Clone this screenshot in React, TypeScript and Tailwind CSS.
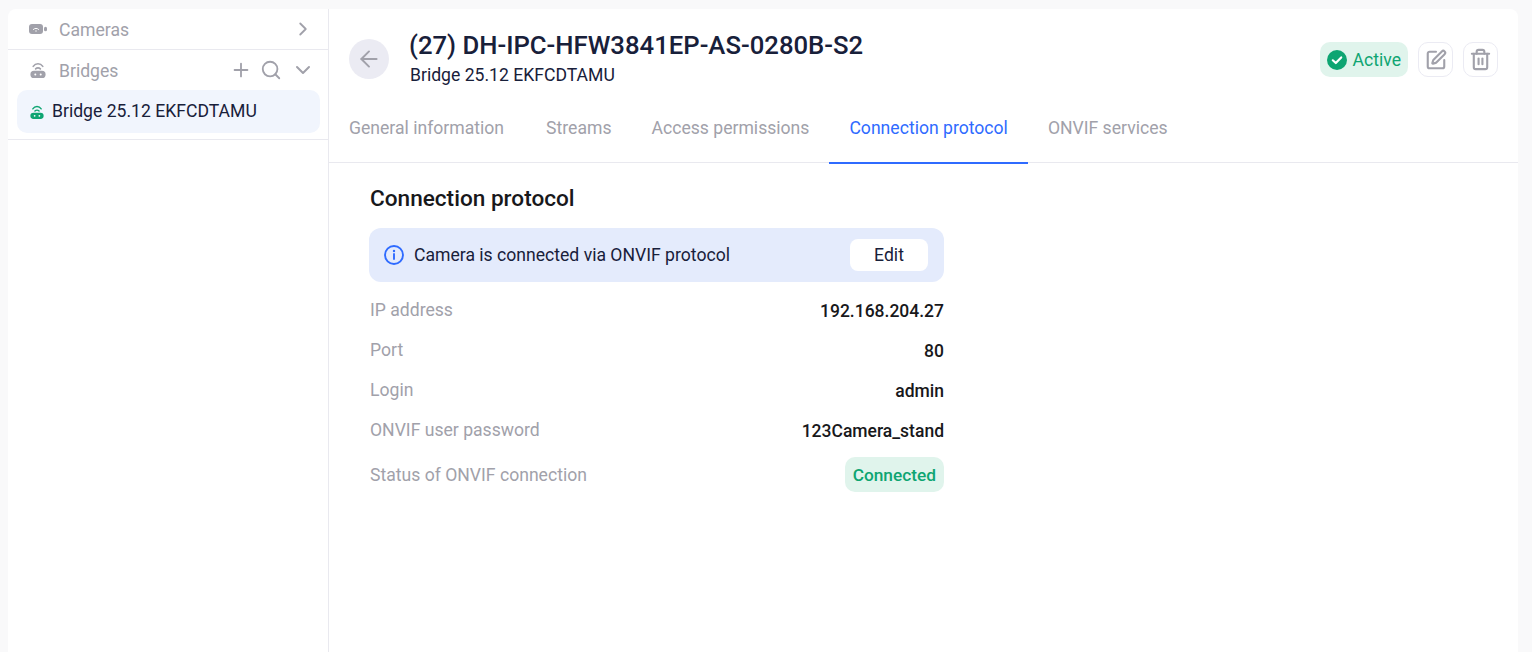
import { ArrowLeft, ChevronDown, ChevronRight, Plus, Search, SquarePen, Trash2 } from "lucide-react";

function BridgeIcon({ className }: { className?: string }) {
  return (
    <svg viewBox="0 0 16 16" className={className} fill="none">
      <path d="M3.2 4.4C5.6 .9 10.4 .9 12.8 4.4" stroke="currentColor" strokeWidth="1.6" strokeLinecap="round" />
      <path d="M5.6 6.9C7 5.5 9 5.5 10.4 6.9" stroke="currentColor" strokeWidth="1.6" strokeLinecap="round" />
      <path d="M4 8.8h8a3.6 3.6 0 0 1 3.6 3.6v0a3.6 3.6 0 0 1-3.6 3.6H4a3.6 3.6 0 0 1-3.6-3.6v0a3.6 3.6 0 0 1 3.6-3.6z" fill="currentColor" />
      <circle cx="5.3" cy="12.4" r="1" fill="white" />
      <circle cx="10.7" cy="12.4" r="1" fill="white" />
    </svg>
  );
}

function CameraIcon({ className }: { className?: string }) {
  return (
    <svg viewBox="0 0 18 10" className={className} fill="none">
      <rect x="0" y="0" width="14" height="10" rx="3" fill="currentColor" />
      <rect x="15" y="2.8" width="3" height="4.4" rx="1.5" fill="currentColor" />
      <path d="M4.4 5.4C5.8 4 8.2 4 9.6 5.4" stroke="white" strokeWidth="1" strokeLinecap="round" />
      <circle cx="7" cy="7" r="0.7" fill="white" />
    </svg>
  );
}

function Row({ label, value }: { label: string; value: string }) {
  return (
    <div className="flex h-10 items-center justify-between">
      <span className="pl-px text-[17.6px] text-[#a1a1aa]">{label}</span>
      <span className="pt-[2px] text-[17.5px] font-medium text-[#18181b]">{value}</span>
    </div>
  );
}

export default function App() {
  const tabs = ["General information", "Streams", "Access permissions", "Connection protocol", "ONVIF services"];

  return (
    <div className="h-[652px] overflow-hidden bg-[#f9f9fa] pl-2 pr-[14px] pt-[9px] font-['Roboto',sans-serif]">
      <div className="flex h-[643px] rounded-t-lg bg-white">
        {/* Sidebar */}
        <aside className="w-[321px] shrink-0 border-r border-[#e9e9ef]">
          <div className="flex h-[41px] items-center border-b border-[#e9e9ef] pl-[21px] pr-[14px]">
            <CameraIcon className="h-[10px] w-[18px] text-[#a1a1aa]" />
            <span className="ml-3 pt-[2px] text-[17.6px] text-[#a1a1aa]">Cameras</span>
            <ChevronRight className="ml-auto text-[#a1a1aa]" size={22} />
          </div>
          <div className="border-b border-[#e9e9ef] pb-[6px]">
            <div className="flex h-10 items-center pl-[22px] pr-[13px]">
              <BridgeIcon className="h-4 w-4 text-[#a1a1aa]" />
              <span className="ml-[13px] pt-[2px] text-[17.6px] text-[#a1a1aa]">Bridges</span>
              <div className="ml-auto flex items-center gap-2 text-[#a1a1aa]">
                <Plus size={22} />
                <Search size={22} />
                <ChevronDown size={24} className="ml-px" />
              </div>
            </div>
            <div className="ml-[9px] mr-2 flex h-[43px] items-center rounded-[10px] bg-[#f1f5fd] pl-[13px]">
              <BridgeIcon className="h-[14px] w-[14px] text-[#0ea572]" />
              <span className="ml-2 text-[17.6px] text-[#18203a]">Bridge 25.12 EKFCDTAMU</span>
            </div>
          </div>
        </aside>

        {/* Main */}
        <main className="min-w-0 flex-1">
          <div className="flex h-[99px] items-start pl-5 pr-5 pt-[30px]">
            <button className="flex h-10 w-10 items-center justify-center rounded-full bg-[#ebebf3] text-[#a1a1aa]">
              <ArrowLeft size={26} strokeWidth={1.8} />
            </button>
            <div className="ml-5 -mt-[10px]">
              <h1 className="text-[25.7px] font-medium leading-[32px] text-[#18203a]">(27) DH-IPC-HFW3841EP-AS-0280B-S2</h1>
              <p className="mt-px pl-px text-[17.6px] leading-[26px] text-[#18203a]">Bridge 25.12 EKFCDTAMU</p>
            </div>
            <div className="ml-auto flex items-center gap-[10px] pt-[3px]">
              <div className="flex h-[35px] items-center gap-[6px] rounded-[10px] bg-[#e0f4ec] px-[7px] text-[#0ea572]">
                <svg viewBox="0 0 20 20" className="h-5 w-5">
                  <circle cx="10" cy="10" r="10" fill="currentColor" />
                  <path d="M5.8 10.3 8.8 13l5.4-5.6" stroke="white" strokeWidth="2.2" fill="none" strokeLinecap="round" strokeLinejoin="round" />
                </svg>
                <span className="pt-[2px] text-[17.6px]">Active</span>
              </div>
              <button className="flex h-[35px] w-[35px] items-center justify-center rounded-[10px] border border-[#ebebf3] text-[#a1a1aa]">
                <SquarePen size={22} strokeWidth={2.3} />
              </button>
              <button className="flex h-[35px] w-[35px] items-center justify-center rounded-[10px] border border-[#ebebf3] text-[#a1a1aa]">
                <Trash2 size={23} strokeWidth={2.2} />
              </button>
            </div>
          </div>

          <nav className="flex h-[55px] border-b border-[#e9e9ef]">
            {tabs.map((t) => (
              <div
                key={t}
                className={
                  t === "Connection protocol"
                    ? "-mb-px h-[56px] border-b-2 border-[#2f6bff] px-5 pt-[7px] text-[17.6px] text-[#2f6bff]"
                    : "px-5 pt-[7px] text-[17.6px] text-[#a1a1aa] first:pr-[22px]"
                }
              >
                {t}
              </div>
            ))}
          </nav>

          <section className="ml-10 w-[575px] pt-[22px]">
            <h2 className="pl-px text-[22.6px] font-medium leading-[28px] text-[#18181b]">Connection protocol</h2>
            <div className="mt-[15px] flex h-[54px] items-center rounded-xl bg-[#e4ebfc] pl-[15px] pr-4">
              <svg viewBox="0 0 20 20" className="h-5 w-5 text-[#2f6bff]" fill="none">
                <circle cx="10" cy="10" r="9" stroke="currentColor" strokeWidth="1.9" />
                <path d="M10 9v5" stroke="currentColor" strokeWidth="1.9" strokeLinecap="round" />
                <circle cx="10" cy="6" r="1.2" fill="currentColor" />
              </svg>
              <span className="ml-[10px] text-[17.6px] text-[#18203a]">Camera is connected via ONVIF protocol</span>
              <button className="ml-auto h-8 w-[78px] rounded-lg bg-white text-[17.6px] text-[#18203a]">Edit</button>
            </div>
            <div className="mt-2">
              <Row label="IP address" value="192.168.204.27" />
              <Row label="Port" value="80" />
              <Row label="Login" value="admin" />
              <Row label="ONVIF user password" value="123Camera_stand" />
              <div className="mt-[7px] flex items-center justify-between">
                <span className="pl-px pt-[2px] text-[17.6px] text-[#a1a1aa]">Status of ONVIF connection</span>
                <span className="flex h-[35px] items-center rounded-[10px] bg-[#e0f4ec] px-2 pt-[2px] text-[17.3px] font-medium text-[#0ea572]">Connected</span>
              </div>
            </div>
          </section>
        </main>
      </div>
    </div>
  );
}
